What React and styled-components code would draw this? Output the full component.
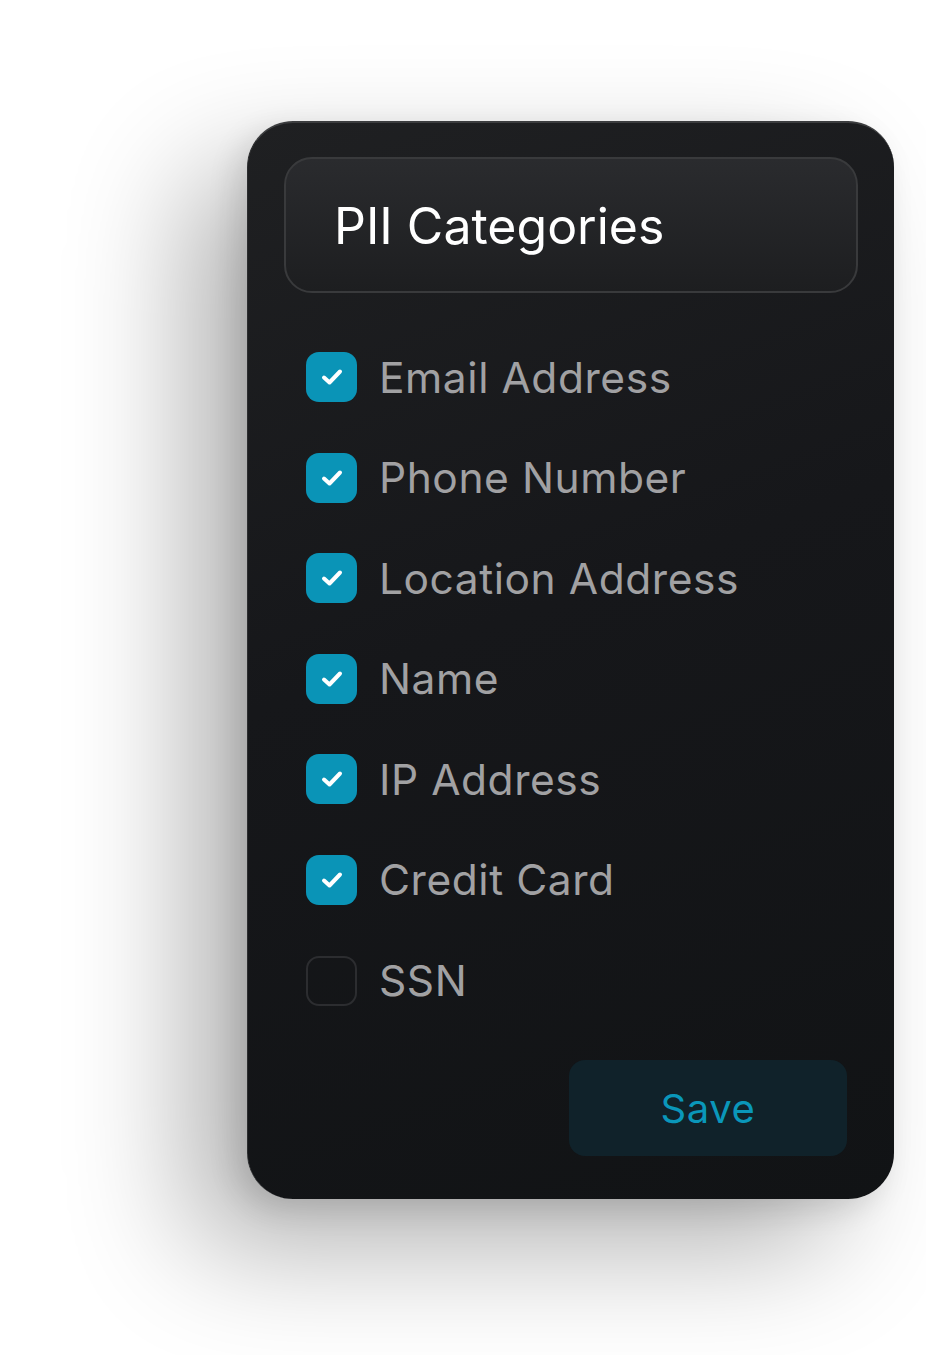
import React from "react";
import styled, { createGlobalStyle } from "styled-components";

const Global = createGlobalStyle`
  html, body { margin: 0; padding: 0; background: #ffffff; }
  body { font-family: Inter, "Noto Sans", sans-serif; }
`;

const Page = styled.div`
  width: 926px;
  height: 1355px;
  padding: 121px 0 0 247px;
  box-sizing: border-box;
  overflow: hidden;
`;

const Card = styled.div`
  width: 647px;
  height: 1078px;
  box-sizing: border-box;
  border-radius: 46px;
  background: linear-gradient(160deg, #1f2022 0%, #16171a 45%, #111315 100%);
  box-shadow: -60px 50px 120px rgba(0, 0, 0, 0.3), -10px 10px 30px rgba(0, 0, 0, 0.12);
  border-top: 2px solid #3c3d3f;
  border-left: 1.5px solid #2c2d2f;
  padding: 34px 36px 43px 36px;
  display: flex;
  flex-direction: column;
`;

const Header = styled.div`
  height: 136px;
  box-sizing: border-box;
  border-radius: 28px;
  border: 2px solid #393a3c;
  background: linear-gradient(180deg, #2a2b2e 0%, #1d1e20 100%);
  display: flex;
  align-items: center;
  padding-left: 48px;
`;

const Title = styled.h1`
  margin: 0;
  font-size: 50px;
  font-weight: 400;
  color: #ffffff;
  letter-spacing: 0;
  padding-top: 2px;
`;

const List = styled.div`
  display: flex;
  flex-direction: column;
  gap: 50.6px;
  margin-top: 59px;
  padding-left: 22px;
`;

const Row = styled.label`
  display: flex;
  align-items: center;
  gap: 22px;
  height: 50px;
`;

const Box = styled.span`
  width: 51px;
  height: 50px;
  box-sizing: border-box;
  border-radius: 13px;
  display: flex;
  align-items: center;
  justify-content: center;
  background: ${(p) => (p.$checked ? "#0a94b7" : "transparent")};
  border: ${(p) => (p.$checked ? "none" : "2px solid #2c2d30")};
`;

const Label = styled.span`
  font-size: 42.5px;
  color: #a1a1a3;
  font-weight: 400;
  letter-spacing: 0.55px;
`;

const Footer = styled.div`
  margin-top: auto;
  display: flex;
  justify-content: flex-end;
  padding-right: 11px;
`;

const SaveButton = styled.button`
  width: 278px;
  height: 96px;
  border: none;
  border-radius: 16px;
  background: #10222a;
  color: #0a97ba;
  font-family: Inter, "Noto Sans", sans-serif;
  font-size: 40px;
  font-weight: 400;
  letter-spacing: 0.6px;
  cursor: pointer;
`;

const Check = () => (
  <svg width="24" height="20" viewBox="0 0 24 20" fill="none">
    <path d="M4 10.5 L9.5 15.5 L20 4.5" stroke="#ffffff" strokeWidth="4" strokeLinecap="round" strokeLinejoin="round" />
  </svg>
);

const items = [
  { label: "Email Address", checked: true },
  { label: "Phone Number", checked: true },
  { label: "Location Address", checked: true },
  { label: "Name", checked: true },
  { label: "IP Address", checked: true },
  { label: "Credit Card", checked: true },
  { label: "SSN", checked: false },
];

export default function App() {
  return (
    <>
      <Global />
      <Page>
        <Card>
          <Header>
            <Title>PII Categories</Title>
          </Header>
          <List>
            {items.map((it) => (
              <Row key={it.label}>
                <Box $checked={it.checked}>{it.checked && <Check />}</Box>
                <Label>{it.label}</Label>
              </Row>
            ))}
          </List>
          <Footer>
            <SaveButton>Save</SaveButton>
          </Footer>
        </Card>
      </Page>
    </>
  );
}
